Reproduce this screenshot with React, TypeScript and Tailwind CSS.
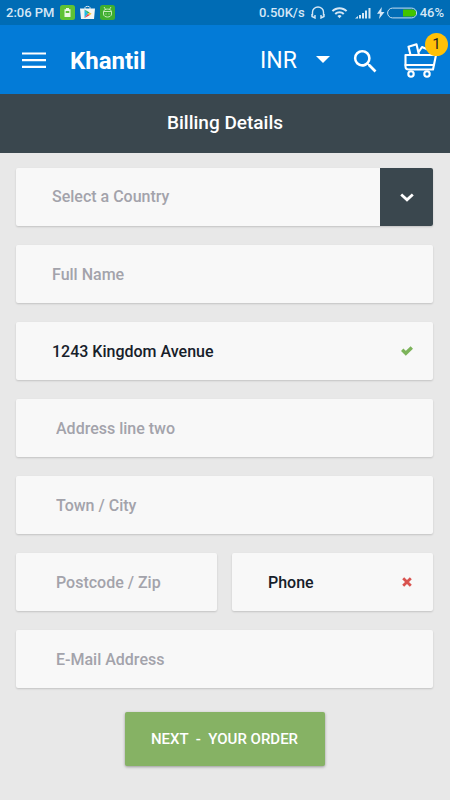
import { MdSearch, MdWifi } from "react-icons/md";

const card = "h-[58px] w-full rounded-xs bg-[#f8f8f8] shadow-[0_1px_2px_rgba(0,0,0,0.16)]";
const text = "text-[16px] font-medium text-[#16202a] placeholder:text-[#a3a3ab] outline-none";

type FieldProps = {
  id: string;
  label: string;
  type?: string;
  value?: string;
  status?: "ok" | "error";
  pad?: string;
};

function Field({ id, label, type = "text", value, status, pad = "pl-10" }: FieldProps) {
  return (
    <div className={`${card} flex min-w-0 items-center pr-5`}>
      <input
        id={id}
        type={type}
        aria-label={label}
        placeholder={label}
        defaultValue={value}
        className={`${text} ${pad} h-full min-w-0 flex-1 bg-transparent`}
      />
      {status === "ok" && (
        <svg viewBox="0 0 12 10" className="h-[10px] w-3 shrink-0" fill="none" stroke="#7cb35a" strokeWidth="3.4">
          <path d="M1.200 3.800L4.800 7.300 10.800 1.500" />
        </svg>
      )}
      {status === "error" && (
        <svg viewBox="0 0 10 10" className="mr-px size-[10px] shrink-0" fill="none" stroke="#d9534f" strokeWidth="2.800">
          <path d="M1.200 1.200l7.600 7.600M8.800 1.200L1.200 8.800" />
        </svg>
      )}
    </div>
  );
}

function StatusBar() {
  return (
    <div className="flex h-[25px] items-center justify-between bg-[#006cb5] px-[6px] text-[13px] font-medium text-[#d5e7f5]">
      <div className="flex items-center gap-[5px]">
        <span>2:06 PM</span>
        <svg viewBox="0 0 15 15" className="size-[15px]">
          <rect width="15" height="15" rx="2.5" fill="#5fc234" />
          <path d="M6 3h3v1.200h1.500V12h-6V4.200H6z" fill="#e9f8e2" />
          <rect x="5.700" y="6" width="3.600" height="2" fill="#5fc234" />
        </svg>
        <svg viewBox="0 0 15 15" className="size-[15px]">
          <path d="M5 4V2.500C5 1 10 1 10 2.500V4" fill="none" stroke="#dfe9ee" />
          <path d="M0 3.500h15L14 14H1z" fill="#f2f5f5" />
          <path d="M4.500 4.500v8.500L8 8.800z" fill="#22b8e6" />
          <path d="M4.500 4.500L8 8.800l1.600-1.400z" fill="#28b35c" />
          <path d="M4.500 13L8 8.800l1.600 1.400z" fill="#e8434f" />
          <path d="M9.600 7.400l2 1.400-2 1.400L8 8.800z" fill="#f8c32c" />
        </svg>
        <svg viewBox="0 0 15 15" className="size-[15px]">
          <rect width="15" height="15" rx="2.500" fill="#3fae2f" />
          <g fill="none" stroke="#c4ecb8">
            <path d="M4 2l1.300 2M11 2L9.700 4M3.500 6.500C4 3.300 11 3.300 11.500 6.500zM3.500 6.500v2.500c0 4 8 4 8 0V6.500" />
            <path d="M5.500 9h1M8.500 9h1" />
          </g>
        </svg>
      </div>
      <div className="flex items-center">
        <span>0.50K/s</span>
        <svg viewBox="0 0 14 13" className="ml-[6px] h-[13px] w-[14px]" fill="none" stroke="currentColor" strokeWidth="1.400">
          <path d="M1.500 9.500V6a5.500 5 0 0 1 11 0v3.500" />
          <path d="M1 8v2.500l3 1.500V9M13 8v2.500l-3 1.500V9" />
        </svg>
        <MdWifi className="ml-[6px] size-[17px]" />
        <svg viewBox="0 0 16 12" className="ml-[7px] h-3 w-4" fill="currentColor">
          <path d="M0 11.500L3 9v2.500zM4 8h2v3.500H4zM7 6h2v5.500H7zM10 3.500h2v8h-2zM13.500 1h2v10.500h-2z" />
        </svg>
        <svg viewBox="0 0 8 12" className="ml-[6px] h-3 w-2" fill="currentColor">
          <path d="M4.800 0L0 6.800h3L2 12l5.500-7H4.300z" />
        </svg>
        <svg viewBox="0 0 31 12" className="ml-[2px] h-3 w-[31px]">
          <rect x="0.600" y="1.100" width="29" height="9.800" rx="4.900" fill="none" stroke="#c5dff2" />
          <path d="M16 2.500h9.500a3.500 3.500 0 0 1 0 7H16z" fill="#42c400" />
        </svg>
        <span className="ml-[2px]">46%</span>
      </div>
    </div>
  );
}

function Header() {
  return (
    <header className="flex h-[69px] items-center bg-[#037bd7] pt-[3px] pl-[18px] text-white">
      <button type="button" aria-label="Menu" className="flex size-8 shrink-0 items-center justify-center">
        <svg viewBox="0 0 24 18" className="h-[18px] w-6" stroke="currentColor" strokeWidth="2.200">
          <path d="M0 1.500h24M0 8.200h24M0 14.900h24" />
        </svg>
      </button>
      <h1 className="ml-5 text-[24px] font-bold">Khantil</h1>
      <div className="ml-auto flex items-center">
        <div className="grid items-center">
          <select
            aria-label="Currency"
            className="col-start-1 row-start-1 w-[70px] appearance-none bg-transparent text-[23px] outline-none"
          >
            <option>INR</option>
          </select>
          <svg viewBox="0 0 14 7" className="pointer-events-none col-start-1 row-start-1 mb-1 h-[7px] w-[14px] justify-self-end">
            <path d="M0 0h14L7 7z" fill="currentColor" />
          </svg>
        </div>
        <button type="button" aria-label="Search" className="ml-5 flex size-[31px] items-center justify-center">
          <MdSearch className="size-[31px]" />
        </button>
        <a href="#cart" aria-label="Cart" className="relative ml-[23px] block h-14 w-[46px]">
          <svg
            viewBox="0 0 34 36"
            className="mt-[10px] h-9 w-[34px]"
            fill="none"
            stroke="currentColor"
            strokeWidth="2.100"
            strokeLinecap="round"
            strokeLinejoin="round"
          >
            <path d="M1.500 12H32L29 26.500H4.500c-2 0-3-1-3-3z" />
            <path d="M1.500 22H29.500" />
            <path d="M6.500 12L4.500 3.800l8-2.500L15 12M15 8.500l3-4.500 7 3" />
            <circle cx="7" cy="31" r="2.700" fill="#037bd7" />
            <circle cx="23" cy="31" r="2.700" fill="#037bd7" />
          </svg>
          <span className="absolute top-0 right-[2px] flex size-[23px] items-center justify-center rounded-full bg-[#ffc107] text-[15px] text-[#222]">
            1
          </span>
        </a>
      </div>
    </header>
  );
}

export default function App() {
  return (
    <div className="min-h-screen bg-[#e8e8e8] font-[Roboto,sans-serif]">
      <StatusBar />
      <Header />
      <div className="flex h-[59px] items-center justify-center bg-[#3a474e]">
        <h2 className="text-[19px] font-medium text-white">Billing Details</h2>
      </div>

      <form className="flex flex-col gap-[19px] pt-[15px] pr-[17px] pl-4">
        <div className={`${card} grid overflow-hidden`}>
          <select
            aria-label="Country"
            className="col-start-1 row-start-1 w-full appearance-none bg-transparent pl-9 text-[16px] font-medium text-[#a3a3ab] outline-none"
          >
            <option>Select a Country</option>
          </select>
          <span className="pointer-events-none col-start-1 row-start-1 flex w-[53px] items-center justify-center justify-self-end bg-[#3a474e]">
            <svg viewBox="0 0 14 9" className="h-[9px] w-[14px]" fill="none" stroke="#fff" strokeWidth="2.800">
              <path d="M1.200 1.500L7 6.800l5.800-5.300" />
            </svg>
          </span>
        </div>
        <Field id="name" label="Full Name" pad="pl-9" />
        <Field id="address1" label="Address line one" value="1243 Kingdom Avenue" status="ok" pad="pl-9" />
        <Field id="address2" label="Address line two" />
        <Field id="town" label="Town / City" />
        <div className="flex gap-[15px]">
          <Field id="postcode" label="Postcode / Zip" />
          <Field id="phone" label="Phone" type="tel" value="Phone" status="error" pad="pl-9" />
        </div>
        <Field id="email" label="E-Mail Address" type="email" />
        <button
          type="button"
          className="mt-[5px] h-[54px] w-[200px] self-center rounded-xs bg-[#86b264] text-[15px] font-medium whitespace-pre text-white shadow-[0_1px_3px_rgba(0,0,0,0.35)]"
        >
          {"NEXT  -  YOUR ORDER"}
        </button>
      </form>
    </div>
  );
}
